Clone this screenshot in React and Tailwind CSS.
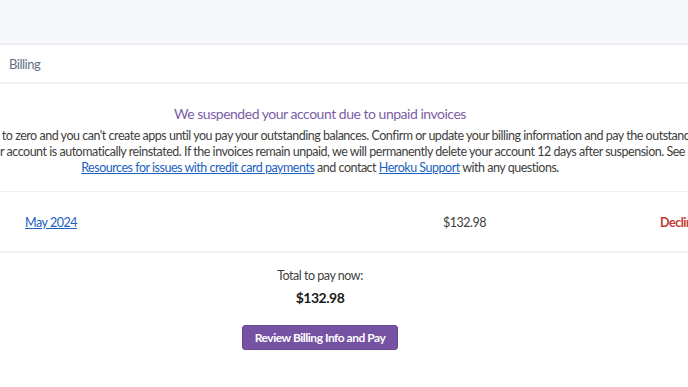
export default function App() {
  return (
    <div className="w-[688px] h-[387px] overflow-hidden bg-white font-['Lato',sans-serif] tracking-[-0.03em]">
      <div className="h-[45px] bg-[#f6f7fb] border-b-2 border-[#eceef3]" />
      <div className="h-[39px] bg-white border-b-2 border-[#eef0f3] flex items-center pl-[9px]">
        <span className="text-[13px] text-[#5f6f84] pt-[3px]">Billing</span>
      </div>
      <div className="w-[1040px] ml-[-200px]">
        <div className="pt-[21px] pb-[15px] text-center border-b border-[#eef0f3]">
          <div className="text-[14px] text-[#7b5ea7] leading-[18px]">We suspended your account due to unpaid invoices</div>
          <div className="mt-[5px] text-[12.5px] text-[#3e3e3c] leading-[16px] whitespace-nowrap">
            <div>Your dynos are scaled down to zero and you can't create apps until you pay your outstanding balances. Confirm or update your billing information and pay the outstanding invoices. Once</div>
            <div>paid, your account is automatically reinstated. If the invoices remain unpaid, we will permanently delete your account 12 days after suspension. See</div>
            <div>
              <a href="#" className="text-[#1b5fc1] underline">Resources for issues with credit card payments</a> and contact{" "}
              <a href="#" className="text-[#1b5fc1] underline">Heroku Support</a> with any questions.
            </div>
          </div>
        </div>
        <div className="h-[61px] flex items-center border-b-2 border-[#f0f1f4] text-[12.5px] pt-[3px]">
          <div className="w-[418px] pl-[225px] box-content">
            <a href="#" className="text-[#1b5fc1] underline">May 2024</a>
          </div>
          <div className="w-[217px] text-[#3e3e3c]">$132.98</div>
          <div className="text-[#c23934] font-bold">Declined</div>
        </div>
        <div className="flex flex-col items-center pt-[15px]">
          <div className="text-[12.5px] text-[#3e3e3c] leading-[16px]">Total to pay now:</div>
          <div className="mt-[5px] text-[14px] font-bold text-[#1a1a1a] leading-[18px]">$132.98</div>
          <button className="mt-[18px] h-[25px] px-[12px] rounded-[3px] bg-[#7652a3] border border-[#6a4a95] text-white text-[12px] font-bold tracking-[-0.04em]">Review Billing Info and Pay</button>
        </div>
      </div>
    </div>
  );
}
